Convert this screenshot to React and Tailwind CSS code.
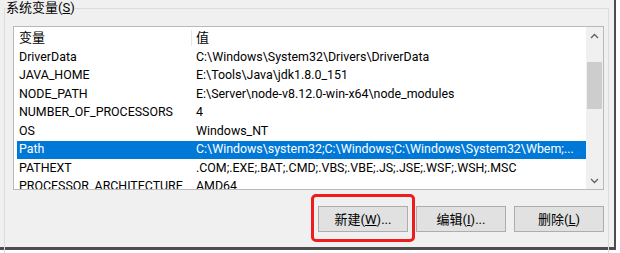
const rows = [
  ['DriverData', 'C:\\Windows\\System32\\Drivers\\DriverData'],
  ['JAVA_HOME', 'E:\\Tools\\Java\\jdk1.8.0_151'],
  ['NODE_PATH', 'E:\\Server\\node-v8.12.0-win-x64\\node_modules'],
  ['NUMBER_OF_PROCESSORS', '4'],
  ['OS', 'Windows_NT'],
  ['Path', 'C:\\Windows\\system32;C:\\Windows;C:\\Windows\\System32\\Wbem;...'],
  ['PATHEXT', '.COM;.EXE;.BAT;.CMD;.VBS;.VBE;.JS;.JSE;.WSF;.WSH;.MSC'],
  ['PROCESSOR_ARCHITECTURE', 'AMD64'],
]

function Chevron({ down }) {
  return (
    <svg width="9" height="6" viewBox="0 0 9 6" className={down ? 'rotate-180' : ''}>
      <path d="M1 5 L4.5 1.5 L8 5" fill="none" stroke="#606060" strokeWidth="1.3" />
    </svg>
  )
}

function Button({ label, k, rest }) {
  return (
    <button className="w-[90px] h-[26px] bg-[#e1e1e1] border border-[#adadad] text-[13px] leading-none text-black flex items-center justify-center">
      {label}(<span className="underline">{k}</span>){rest}
    </button>
  )
}

export default function App() {
  return (
    <div
      className="w-[620px] h-[253px] bg-white overflow-hidden text-black text-[13px]"
      style={{ fontFamily: 'Roboto, "Noto Sans CJK SC", sans-serif' }}
    >
      <div className="w-[616px] h-[250px] bg-[#f0f0f0] border-r-2 border-b-[3px] border-[#4d4d4d]">
        <fieldset className="ml-[4px] mr-[5px] h-[260px] border border-[#dcdcdc]">
          <legend className="ml-[1px] leading-[16px]">
            系统变量(<span className="underline">S</span>)
          </legend>

          <div className="ml-[8px] mt-[10px] w-[591px] h-[164px] bg-white border border-[#b9b9b9] flex">
            <div className="w-[572px] flex flex-col overflow-hidden">
              <div className="h-[21px] shrink-0 flex items-center">
                <div className="w-[177px] pl-[5px]">变量</div>
                <div className="w-px h-[16px] bg-[#e5e5e5]" />
                <div className="pl-[4px]">值</div>
              </div>
              {rows.map(([name, value]) => {
                const sel = name === 'Path'
                return (
                  <div key={name} className="pl-[3px] shrink-0">
                    <div
                      className={
                        'h-[18.5px] flex items-center whitespace-nowrap text-[12.4px] ' +
                        (sel ? 'bg-[#0078d7] text-white' : '')
                      }
                    >
                      <div className="w-[174px] pl-[2px]">{name}</div>
                      <div className="pl-[5px]">{value}</div>
                    </div>
                  </div>
                )
              })}
            </div>
            <div className="w-[17px] bg-[#f0f0f0] flex flex-col items-center">
              <div className="h-[17px] flex items-center justify-center">
                <Chevron />
              </div>
              <div className="mt-[18px] w-[15px] h-[47px] bg-[#cdcdcd]" />
              <div className="flex-1" />
              <div className="h-[17px] flex items-center justify-center">
                <Chevron down />
              </div>
            </div>
          </div>

          <div className="relative mt-[16px] w-[599px] flex justify-end gap-[8px]">
            <Button label="新建" k="W" rest="..." />
            <Button label="编辑" k="I" rest="..." />
            <Button label="删除" k="L" rest="" />
            <div className="absolute left-[306px] top-[-12px] w-[104px] h-[48px] border-[3px] border-[#ee1c1c] rounded-[5px]" />
          </div>
        </fieldset>
      </div>
    </div>
  )
}
